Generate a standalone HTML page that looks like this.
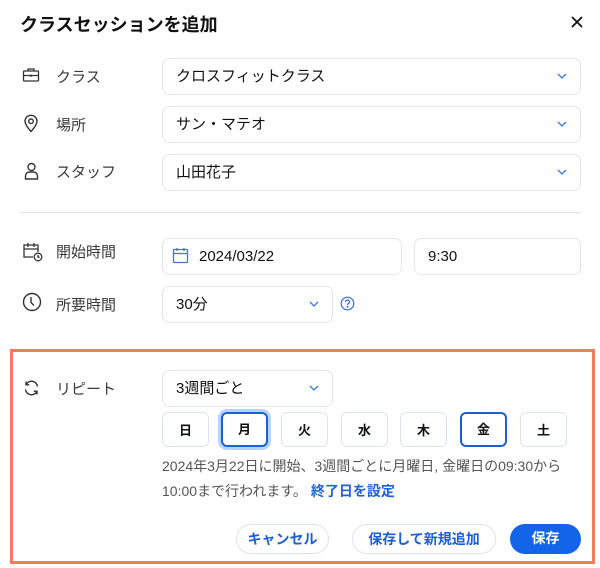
<!DOCTYPE html>
<html><head><meta charset="utf-8"><style>
*{box-sizing:border-box;margin:0;padding:0}
body{width:600px;height:568px;background:#fff;font-family:"Liberation Sans","Noto Sans CJK JP",sans-serif;color:#222;position:relative;overflow:hidden}
.a{position:absolute}
.title{left:20px;top:11px;font-size:18px;font-weight:bold;color:#111}
.lbl{font-size:15px;color:#3a3a3a;left:56px}
.inp{border:1px solid #e2e6f3;border-radius:7px;height:37px;font-size:15px;color:#111;padding-left:13px;line-height:35px;background:#fff}
.chev{position:absolute;right:12px;top:13px}
.day{border:1px solid #dde3f2;border-radius:6px;width:47px;height:35px;top:412px;font-size:13px;font-weight:bold;text-align:center;line-height:35px;color:#111}
.sel{border:2px solid #1a5fd6;line-height:31px}
.btn{top:524px;height:30px;border-radius:15px;font-size:14px;font-weight:bold;text-align:center;line-height:28px}
.ol{border:1px solid #dde3f2;color:#1b5fd4}
.txt{font-size:14px;color:#555;left:162px}
</style></head><body>
<div class="a title">クラスセッションを追加</div>
<svg class="a" style="left:570px;top:15px" width="14" height="14" viewBox="0 0 14 14"><path d="M2 2L12 12M12 2L2 12" stroke="#111" stroke-width="1.8"/></svg>

<svg class="a" style="left:22px;top:67px" width="18" height="16" viewBox="0 0 18 16" fill="none" stroke="#333" stroke-width="1.3"><rect x="1.5" y="4" width="15" height="10" rx="1"/><path d="M6 4V2h6v2M1.5 8.5h15M9 7.5v2.5"/></svg>
<div class="a lbl" style="top:66px">クラス</div>
<div class="a inp" style="left:162px;top:58px;width:419px">クロスフィットクラス<svg class="chev" width="12" height="8" viewBox="0 0 12 8"><path d="M2 2l4 4 4-4" stroke="#3a78d8" stroke-width="1.3" fill="none"/></svg></div>
<svg class="a" style="left:23px;top:114px" width="16" height="19" viewBox="0 0 16 19" fill="none" stroke="#333" stroke-width="1.4"><path d="M8 17.5C4 13 2 10 2 7.3A6 6 0 0 1 14 7.3C14 10 12 13 8 17.5Z"/><circle cx="8" cy="7.3" r="2.3"/></svg>
<div class="a lbl" style="top:114px">場所</div>
<div class="a inp" style="left:162px;top:106px;width:419px">サン・マテオ<svg class="chev" width="12" height="8" viewBox="0 0 12 8"><path d="M2 2l4 4 4-4" stroke="#3a78d8" stroke-width="1.3" fill="none"/></svg></div>
<svg class="a" style="left:24px;top:162px" width="15" height="18" viewBox="0 0 15 18" fill="none" stroke="#333" stroke-width="1.4"><circle cx="7.5" cy="5" r="3.5"/><path d="M1.5 17v-3a4 4 0 0 1 4-4h4a4 4 0 0 1 4 4v3z"/></svg>
<div class="a lbl" style="top:161px">スタッフ</div>
<div class="a inp" style="left:162px;top:154px;width:419px">山田花子<svg class="chev" width="12" height="8" viewBox="0 0 12 8"><path d="M2 2l4 4 4-4" stroke="#3a78d8" stroke-width="1.3" fill="none"/></svg></div>

<div class="a" style="left:20px;top:212px;width:561px;height:1px;background:#dde0e8"></div>

<svg class="a" style="left:22px;top:241px" width="22" height="21" viewBox="0 0 22 21" fill="none" stroke="#333" stroke-width="1.3"><path d="M11 16H2V4h14v7M2 8h14M6 2v4M12 2v4"/><circle cx="16" cy="16" r="3.8"/><path d="M16 14v2.2h1.6"/></svg>
<div class="a lbl" style="top:241px">開始時間</div>
<div class="a inp" style="left:162px;top:238px;width:240px;padding-left:36px">2024/03/22</div>
<svg class="a" style="left:172px;top:247px" width="17" height="17" viewBox="0 0 17 17" fill="none" stroke="#3a78d8" stroke-width="1.3"><rect x="1.5" y="2.5" width="14" height="13" rx="1"/><path d="M1.5 6.5h14M5 1v3M12 1v3"/></svg>
<div class="a inp" style="left:414px;top:238px;width:167px">9:30</div>
<svg class="a" style="left:22px;top:292px" width="20" height="20" viewBox="0 0 20 20" fill="none" stroke="#333" stroke-width="1.4"><circle cx="10" cy="10" r="8.5"/><path d="M9 5v5.5l3 3"/></svg>
<div class="a lbl" style="top:294px">所要時間</div>
<div class="a inp" style="left:162px;top:286px;width:171px">30分<svg class="chev" width="12" height="8" viewBox="0 0 12 8"><path d="M2 2l4 4 4-4" stroke="#3a78d8" stroke-width="1.3" fill="none"/></svg></div>
<svg class="a" style="left:340px;top:296px" width="15" height="15" viewBox="0 0 15 15" fill="none" stroke="#2f6fdc" stroke-width="1.2"><circle cx="7.5" cy="7.5" r="6.3"/><path d="M5.6 6a1.9 1.9 0 1 1 2.6 1.7c-.6.3-.7.6-.7 1.3"/><circle cx="7.5" cy="10.8" r=".4" fill="#2f6fdc"/></svg>

<div class="a" style="left:10px;top:349px;width:585px;height:215px;border:3px solid #f47b60"></div>
<svg class="a" style="left:23px;top:380px" width="17" height="16" viewBox="0 0 17 16" fill="none" stroke="#333" stroke-width="1.4"><path d="M14.5 6.5A6 6 0 0 0 3.2 4.5M2.5 9.5A6 6 0 0 0 13.8 11.5M3 1.5v3.3h3.3M14 14.5v-3.3h-3.3"/></svg>
<div class="a lbl" style="top:378px">リピート</div>
<div class="a inp" style="left:162px;top:370px;width:171px">3週間ごと<svg class="chev" width="12" height="8" viewBox="0 0 12 8"><path d="M2 2l4 4 4-4" stroke="#3a78d8" stroke-width="1.3" fill="none"/></svg></div>

<div class="a day" style="left:162px">日</div>
<div class="a day sel" style="left:221px;box-shadow:0 0 0 3px #b8d3fa">月</div>
<div class="a day" style="left:281px">火</div>
<div class="a day" style="left:341px">水</div>
<div class="a day" style="left:400px">木</div>
<div class="a day sel" style="left:460px">金</div>
<div class="a day" style="left:520px">土</div>

<div class="a txt" style="top:456px">2024年3月22日に開始、3週間ごとに月曜日, 金曜日の09:30から</div>
<div class="a txt" style="top:481px">10:00まで行われます。 <span style="color:#1b63d8;font-weight:bold">終了日を設定</span></div>

<div class="a btn ol" style="left:236px;width:93px">キャンセル</div>
<div class="a btn ol" style="left:352px;width:144px">保存して新規追加</div>
<div class="a btn" style="left:510px;width:71px;background:#1364e8;color:#fff">保存</div>
</body></html>
